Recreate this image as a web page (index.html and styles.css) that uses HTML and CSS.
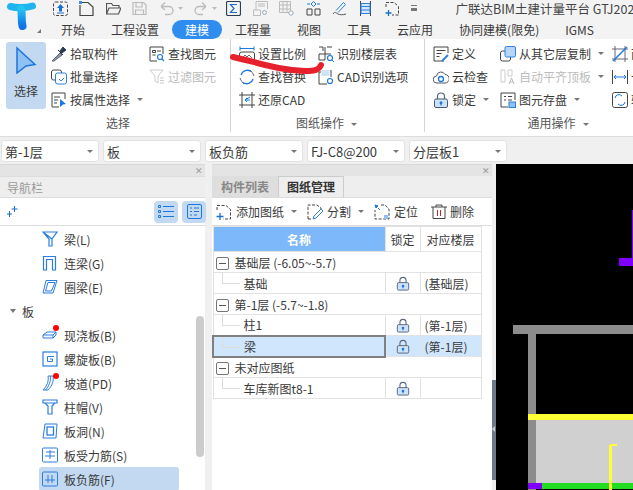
FILE: index.html
```html
<!DOCTYPE html>
<html lang="en">
<head>
    <meta charset="UTF-8">
    <title>广联达BIM土建计量平台</title>
    <link rel="stylesheet" href="styles.css">
</head>
<body>
    <svg class="defs" width="0" height="0">
        <symbol id="lock" viewBox="0 0 16 16">
            <path d="M4.500 7V4.500a3.500 3.500 0 0 1 7 0V7" fill="none" stroke="#5a6478" stroke-width="1.200"/>
            <rect x="1.500" y="7" width="13" height="8.500" rx="1.500" fill="#cfe3f8" stroke="#4a5a78"/>
            <circle cx="8" cy="10.800" r="1.500" fill="#1a78e0"/>
            <path d="M8 11v2.500" stroke="#1a78e0" stroke-width="1.200"/>
        </symbol>
    </svg>

    <header class="top">
        <div class="logo">
            <svg width="47" height="38" viewBox="0 0 47 38">
                <defs><linearGradient id="tg" x1="0" y1="0" x2="0" y2="1"><stop offset="0" stop-color="#22c4f2"/><stop offset="1" stop-color="#1272e6"/></linearGradient></defs>
                <path d="M10.500 6.500C16 8 26 8 32.500 6" fill="none" stroke="#1fb4ee" stroke-width="7" stroke-linecap="round"/>
                <path d="M21 9C22.500 14 21 20 22.500 26" fill="none" stroke="url(#tg)" stroke-width="8" stroke-linecap="round"/>
                <path d="M37 33h4v-4z" fill="#777"/>
            </svg>
        </div>
        <div class="top-main">
            <div class="qat">
                <svg class="q" viewBox="0 0 15 15"><rect x=".5" y="1" width="14" height="13.500" rx="2" fill="none" stroke="#444" stroke-dasharray="3 1.500"/><path d="M7.500 3l3.500 4H9v3.500H6V7H4z" fill="#1a6fd0"/><path d="M4 12h7" stroke="#1a6fd0"/></svg>
                <svg class="q" viewBox="0 0 15 15"><path d="M3 1.500h6l5 4.500v8.500H1V4" fill="none" stroke="#444" stroke-width="1.200"/><path d="M0 0h3v3H0z" fill="#3a8be8"/></svg>
                <svg class="q" viewBox="0 0 15 15"><path d="M.5 13V2.500h5l1.500 2h6V7M.5 13l2.500-6h12l-2.500 6z" fill="none" stroke="#555" stroke-width="1.200"/></svg>
                <svg class="q" viewBox="0 0 15 15"><path d="M1 1.500h10.500L14 4v9.500H1zM4 1.500V6h6V1.500M3.500 13.500V9h8v4.500" fill="none" stroke="#bbb" stroke-width="1.200"/></svg>
                <svg class="q wide" viewBox="0 0 24 15"><path d="M2 5.500h8a4 4 0 0 1 0 8H6M2 5.500L6 1.500M2 5.500L6 9" fill="none" stroke="#bbb" stroke-width="1.300"/><path d="M19 6h5l-2.500 3z" fill="#bbb"/></svg>
                <svg class="q wide2" viewBox="0 0 23 15"><path d="M12 5.500H5a4 4 0 0 0 0 8h4M12 5.500L8 1.500M12 5.500L8 9" fill="none" stroke="#bbb" stroke-width="1.300"/><path d="M18 6h5l-2.500 3z" fill="#bbb"/></svg>
                <svg class="q" viewBox="0 0 15 15"><rect x=".5" y=".5" width="14" height="14" rx="1.500" fill="none" stroke="#2c3e50" stroke-width="1.200"/><path d="M11 3.500H4.500L8 7.500l-3.500 4H11" fill="none" stroke="#1a6fd0" stroke-width="1.200"/></svg>
                <svg class="q" viewBox="0 0 15 15"><path d="M3 9V.5h11.500V8M.5 9h7v5.500H.5z" fill="none" stroke="#bbb"/><path d="M5 3h7M5 5h7" stroke="#bbb"/><circle cx="11.500" cy="11.500" r="2" fill="none" stroke="#9ab"/></svg>
                <svg class="q" viewBox="0 0 15 15"><path d="M.5.500h11v11H.5zM.5 4h11M.5 8h11M4 .5v11M8 .5v11" fill="none" stroke="#bbb"/><circle cx="12" cy="12" r="2.200" fill="#fff" stroke="#9ab"/></svg>
                <svg class="q" viewBox="0 0 15 15"><path d="M1 8h5v6H1zM9 8h5v6H9z" fill="none" stroke="#444"/><path d="M5 3l2.500-2.500L10 3 7.500 5.500z" fill="none" stroke="#1a78e0"/><path d="M1 3h3M11 3h3" stroke="#1a78e0"/></svg>
                <svg class="q" viewBox="0 0 15 15"><path d="M4 9.500l7.500-8 2 2-7.500 8" fill="none" stroke="#2f80e0"/><path d="M1 13c2-3 3-1 5 0s5 1 8 0" fill="none" stroke="#555"/></svg>
                <svg class="q" viewBox="0 0 15 15"><path d="M2.500 0v15M12.500 0v15" stroke="#444"/><path d="M3 2.500h9v10H3zM3 5.500h9M3 9h9" fill="#d3e6fb" stroke="#2f80e0"/></svg>
                <svg class="q" viewBox="0 0 15 15"><path d="M1 6V1.500h8l4.500 4v8.500H7" fill="none" stroke="#444" stroke-dasharray="3 1.500"/><path d="M3.500 9v6M.5 12h6" stroke="#1a6fd0" stroke-width="1.300"/></svg>
                <span class="qat-more"></span>
                <span class="title">广联达BIM土建计量平台 GTJ202</span>
            </div>
            <nav class="tabs">
                <span class="tab">开始</span>
                <span class="tab">工程设置</span>
                <span class="tab active">建模</span>
                <span class="tab">工程量</span>
                <span class="tab">视图</span>
                <span class="tab">工具</span>
                <span class="tab">云应用</span>
                <span class="tab">协同建模(限免)</span>
                <span class="tab">IGMS</span>
            </nav>
        </div>
    </header>

    <section class="ribbon">
        <div class="group g-select">
            <div class="group-body">
                <div class="big-btn">
                    <svg width="22" height="28" viewBox="0 0 22 28"><path d="M2 2l18 16.500-9 1.500-9 7z" fill="#8fc1f5" stroke="#1e74dc" stroke-width="1.500"/></svg>
                    <span>选择</span>
                </div>
                <div class="col c98">
                    <div class="item"><svg class="i" viewBox="0 0 16 16"><path d="M1 15l8-8 2 2-8 6z" fill="#8a97a8" stroke="#667"/><path d="M9 5l3-4 3 3-4 3z M7 4l5 5" fill="#2a3a50" stroke="#2a3a50"/></svg>拾取构件</div>
                    <div class="item"><svg class="i" viewBox="0 0 16 16"><rect x=".5" y="1" width="10" height="10" rx="2" fill="none" stroke="#444"/><rect x="4.500" y="4" width="11" height="11" rx="2" fill="#fff" stroke="#2f80e0"/><path d="M8 10l2 2 3-3" fill="none" stroke="#2f80e0"/></svg>批量选择</div>
                    <div class="item"><svg class="i" viewBox="0 0 16 16"><path d="M9 1H1v14h7M9 1h5v6" fill="none" stroke="#444"/><path d="M3 5h6M3 8h4M3 11h3" stroke="#444"/><path d="M9 7l6 5-3 .5-3 2.500z" fill="#1a78e0"/></svg>按属性选择<i class="caret"></i></div>
                </div>
                <div class="col">
                    <div class="item"><svg class="i" viewBox="0 0 16 16"><path d="M8 15H1V1h13v7" fill="none" stroke="#444"/><path d="M3.500 4.500h3v2h-3zM3.500 9h3M8 5h4" fill="none" stroke="#444"/><circle cx="11" cy="11" r="2.500" fill="none" stroke="#1a78e0" stroke-width="1.200"/><path d="M13 13l2 2" stroke="#1a78e0" stroke-width="1.200"/></svg>查找图元</div>
                    <div class="item off"><svg class="i" viewBox="0 0 16 16"><path d="M1 1h13L9 7v7L6 12V7z" fill="none" stroke="#ccc"/><path d="M11 9h4M11 11.500h4M11 14h4" stroke="#ccc"/></svg>过滤图元</div>
                </div>
            </div>
            <div class="group-label">选择</div>
        </div>

        <div class="group g-drawing">
            <div class="group-body">
                <div class="col c79">
                    <div class="item"><svg class="i" viewBox="0 0 16 16"><path d="M1 2.500h14M1 .5v4M15 .5v4" stroke="#1a78e0"/><rect x=".5" y="6" width="15" height="9" rx="2" fill="none" stroke="#444"/><path d="M3 12l3-3 2 2 2-2 3 3" fill="none" stroke="#667"/></svg>设置比例</div>
                    <div class="item"><svg class="i" viewBox="0 0 16 16"><path d="M2 6a6.500 6.500 0 0 1 10-3.500M14 10a6.500 6.500 0 0 1-10 3.500" fill="none" stroke="#1a78e0" stroke-width="1.300"/><path d="M1 9c1 3 3 5 4 6M15 7c-1-3-3-5-4-6" fill="none" stroke="#667"/></svg>查找替换</div>
                    <div class="item"><svg class="i" viewBox="0 0 16 16"><path d="M3 0v16M13 0v16M0 3h16M0 13h16" stroke="#444"/><path d="M11 5L6 8h5M6 8l2-2M6 8l2 2" fill="none" stroke="#1a78e0"/></svg>还原CAD</div>
                </div>
                <div class="col">
                    <div class="item"><svg class="i" viewBox="0 0 16 16"><path d="M1 1h4v4M9 1h5M1 8h12M1 8v6h6V8M7 1v7" fill="none" stroke="#444"/><circle cx="12" cy="12" r="2.500" fill="none" stroke="#1a78e0" stroke-width="1.200"/><path d="M14 14l2 2" stroke="#1a78e0"/></svg>识别楼层表</div>
                    <div class="item"><svg class="i" viewBox="0 0 16 16"><path d="M1 3v12h8M1 3h2M13 1v7" fill="none" stroke="#444"/><rect x="3.500" y="1" width="8" height="6" fill="#cfe3f8"/><circle cx="12" cy="12" r="2.500" fill="none" stroke="#1a78e0" stroke-width="1.200"/></svg>CAD识别选项</div>
                </div>
            </div>
            <div class="group-label">图纸操作<i class="caret"></i></div>
        </div>

        <div class="group g-general">
            <div class="group-body">
                <div class="col c67">
                    <div class="item"><svg class="i" viewBox="0 0 16 16"><path d="M11 15H1V1h14v6" fill="none" stroke="#444"/><path d="M3.500 4.500h9M3.500 7.500h5M3.500 10.500h3" stroke="#444"/><path d="M9 15l6-6" stroke="#2f80e0" stroke-width="2"/></svg>定义</div>
                    <div class="item"><svg class="i" viewBox="0 0 16 16"><path d="M4 14a3.500 3.500 0 0 1-.5-7 4.500 4.500 0 0 1 8.500-1.500A4 4 0 0 1 12 14z" fill="none" stroke="#556"/><circle cx="8" cy="10" r="2.500" fill="none" stroke="#1a78e0" stroke-width="1.300"/></svg>云检查</div>
                    <div class="item"><svg class="i" viewBox="0 0 16 16"><use href="#lock"/></svg>锁定<i class="caret"></i></div>
                </div>
                <div class="col c112">
                    <div class="item"><svg class="i" viewBox="0 0 16 16"><rect x=".5" y="5" width="10" height="10" rx="2" fill="none" stroke="#444"/><rect x="5" y=".5" width="10.500" height="10.500" rx="1.500" fill="#b6d5f8" stroke="#2f80e0"/></svg>从其它层复制<i class="caret"></i></div>
                    <div class="item off"><svg class="i" viewBox="0 0 16 16"><path d="M1 1h4v12H1zM8 1h4v6H8z" fill="none" stroke="#ccc"/><path d="M9 15l2.500-6 2.500 6M10 13h3" fill="none" stroke="#bbb"/></svg>自动平齐顶板<i class="caret"></i></div>
                    <div class="item"><svg class="i" viewBox="0 0 16 16"><path d="M8 15H1V1h14v7" fill="none" stroke="#444"/><path d="M4 4.500h2M8 4.500h4M4 8h2M8 8h4" stroke="#444"/><rect x="9" y="10" width="6.500" height="5.500" fill="#8fc1f5" stroke="#2f80e0"/></svg>图元存盘<i class="caret"></i></div>
                </div>
                <div class="col">
                    <div class="item"><svg class="i" viewBox="0 0 16 16"><path d="M3 0v16M13 0v16M0 3h16M0 13h16" stroke="#667"/><path d="M1 15L15 1" stroke="#1a78e0" stroke-width="1.500"/></svg>两点</div>
                    <div class="item"><svg class="i" viewBox="0 0 16 16"><path d="M.5 1v14M15.500 1v14" stroke="#444"/><path d="M2 8h12M4 6L2 8l2 2M12 6l2 2-2 2" fill="none" stroke="#1a78e0"/></svg>长度</div>
                    <div class="item"><svg class="i" viewBox="0 0 16 16"><rect x=".5" y=".5" width="15" height="15" rx="2" fill="none" stroke="#444"/><path d="M3 6a4 4 0 0 1 7-2M13 10a4 4 0 0 1-7 2" fill="none" stroke="#1a78e0"/></svg>转换</div>
                </div>
            </div>
            <div class="group-label">通用操作<i class="caret"></i></div>
        </div>
    </section>

    <div class="combos">
        <div class="combo">第-1层<i class="caret"></i></div>
        <div class="combo">板<i class="caret"></i></div>
        <div class="combo">板负筋<i class="caret"></i></div>
        <div class="combo">FJ-C8@200<i class="caret"></i></div>
        <div class="combo">分层板1<i class="caret"></i></div>
    </div>

    <main class="work">
        <aside class="nav-panel">
            <div class="pane-top"><span class="close">✕</span></div>
            <div class="nav-title">导航栏</div>
            <div class="nav-tools">
                <svg class="sparkle" width="11" height="11" viewBox="0 0 11 11"><path d="M7.500 0v6M4.500 3h6M2.500 5v6M0 8h5" stroke="#1a6fd0"/></svg>
                <span class="tool-btn"><svg width="16" height="13" viewBox="0 0 16 13"><path d="M5 1.500h11M5 6.500h11M5 11.500h11" stroke="#1a78e0"/><path d="M.5.500h2v2h-2zM.5 5.500h2v2h-2zM.5 10.500h2v2h-2z" fill="none" stroke="#1a78e0"/></svg></span>
                <span class="tool-btn"><svg width="15" height="15" viewBox="0 0 15 15"><rect x=".5" y=".5" width="14" height="14" rx="1.500" fill="none" stroke="#1a78e0"/><path d="M3 4h2M7 4h5M3 7.500h2M7 7.500h5M3 11h2M7 11h3" stroke="#1a78e0"/></svg></span>
            </div>
            <div class="tree">
                <div class="node"><svg class="n" viewBox="0 0 16 16"><path d="M1 1h14L10 8v7H7V8zM1 1l9 7" fill="none" stroke="#2a7de1" stroke-width="1.200"/></svg>梁(L)</div>
                <div class="node"><svg class="n" viewBox="0 0 16 16"><path d="M1.500 15V1.500h12V15M4.500 15V4.500h6V15" fill="none" stroke="#2a7de1" stroke-width="1.200"/><path d="M1 15h4M10 15h4" stroke="#2a7de1"/></svg>连梁(G)</div>
                <div class="node"><svg class="n" viewBox="0 0 16 16"><path d="M4 1.500h11L11 14H1zM6 3.500h7L9.500 12H3.500z" fill="none" stroke="#2a7de1"/></svg>圈梁(E)</div>
                <div class="branch"><i class="caret-down"></i>板</div>
                <div class="node"><svg class="n" viewBox="0 0 16 16"><path d="M1 8h10l3-3H5zM1 8v3h10l3-3V5M11 8v3" fill="none" stroke="#2a7de1"/></svg>现浇板(B)<b class="dot"></b></div>
                <div class="node"><svg class="n" viewBox="0 0 16 16"><rect x="1" y="1" width="14" height="14" fill="none" stroke="#2a7de1" stroke-width="1.200"/><path d="M8 8h2.500v2.500h-5v-5H12" fill="none" stroke="#2a7de1"/></svg>螺旋板(B)</div>
                <div class="node"><svg class="n" viewBox="0 0 16 16"><path d="M6 1h5c1 5-1 10-5 14H1c4-4 6-9 5-14zM8.500 1C9 6 7 11 3.500 15" fill="none" stroke="#2a7de1"/></svg>坡道(PD)<b class="dot"></b></div>
                <div class="node"><svg class="n" viewBox="0 0 16 16"><path d="M1 1h14v3H1zM3 4l3 3v8h4V7l3-3" fill="none" stroke="#2a7de1" stroke-width="1.200"/></svg>柱帽(V)</div>
                <div class="node"><svg class="n" viewBox="0 0 16 16"><path d="M3 1h12l-1 14H1z" fill="none" stroke="#2a7de1"/><rect x="5" y="4" width="6.500" height="8" fill="none" stroke="#2a7de1" stroke-width="1.300"/></svg>板洞(N)</div>
                <div class="node"><svg class="n" viewBox="0 0 16 16"><rect x=".5" y="1" width="15" height="14" rx="1" fill="none" stroke="#2a7de1"/><path d="M4 5h9M3 9h10M8 3v9" stroke="#2a7de1"/></svg>板受力筋(S)</div>
                <div class="node current"><svg class="n" viewBox="0 0 16 16"><rect x=".5" y="1" width="15" height="14" rx="1" fill="none" stroke="#2a7de1"/><path d="M3 9h10M6 4v8M10 4v8" stroke="#2a7de1"/></svg>板负筋(F)</div>
            </div>
            <span class="nav-scroll"></span>
        </aside>

        <section class="draw-panel">
            <div class="pane-top"><span class="close">✕</span></div>
            <div class="pane-tabs">
                <span class="pane-tab">构件列表</span>
                <span class="pane-tab on">图纸管理</span>
            </div>
            <div class="pane-tools">
                <span class="ptool"><svg class="i" viewBox="0 0 16 16"><path d="M1 6V1.500h9l4.500 4V15H7" fill="none" stroke="#444" stroke-dasharray="3 1.500"/><path d="M4 9v7M.5 12.500h7" stroke="#1a6fd0" stroke-width="1.300"/></svg>添加图纸<i class="caret"></i></span>
                <span class="ptool"><svg class="i" viewBox="0 0 16 16"><path d="M1 15V1h9l4 3v2M1 15h4" fill="none" stroke="#444" stroke-dasharray="3 1.500"/><path d="M6 15l1-3 7-7 2 2-7 7z" fill="none" stroke="#2f80e0"/></svg>分割<i class="caret"></i></span>
                <span class="ptool"><svg class="i" viewBox="0 0 16 16"><path d="M7 1h4l4 4v10H1V6" fill="none" stroke="#444" stroke-dasharray="3 1.500"/><path d="M1 1l3 1-2 2zM4 4l2 2" stroke="#1a78e0" fill="#1a78e0"/><rect x="10" y="11" width="4" height="4" fill="#8fc1f5"/></svg>定位</span>
                <span class="ptool del"><svg class="i" viewBox="0 0 16 16"><path d="M0 3h16M5 3V1h6v2M2 3v11.500h12V3" fill="none" stroke="#444"/><path d="M6.500 6v6M9.500 6v6" stroke="#d02020"/></svg>删除</span>
            </div>
            <table class="sheet">
                <colgroup><col class="c-name"><col class="c-lock"><col class="c-floor"></colgroup>
                <tr class="head"><th class="name">名称</th><th>锁定</th><th>对应楼层</th></tr>
                <tr><td colspan="3" class="grp"><i class="minus"></i>基础层 (-6.05~-5.7)</td></tr>
                <tr><td class="leaf">基础</td><td class="lk"><svg class="l"><use href="#lock"/></svg></td><td>(基础层)</td></tr>
                <tr><td colspan="3" class="grp"><i class="minus"></i>第-1层 (-5.7~-1.8)</td></tr>
                <tr><td class="leaf">柱1</td><td class="lk"><svg class="l"><use href="#lock"/></svg></td><td>(第-1层)</td></tr>
                <tr class="sel"><td class="leaf">梁</td><td class="lk"><svg class="l"><use href="#lock"/></svg></td><td>(第-1层)</td></tr>
                <tr><td colspan="3" class="grp"><i class="minus"></i>未对应图纸</td></tr>
                <tr><td class="leaf">车库新图t8-1</td><td class="lk"><svg class="l"><use href="#lock"/></svg></td><td></td></tr>
            </table>
        </section>

        <div class="splitter"><span class="grip"></span></div>

        <div class="canvas">
            <svg width="137" height="326" viewBox="496 164 137 326">
                <path d="M632 210h1v48h-1z" fill="#8000ff"/>
                <path d="M619 258h14v8h-14z" fill="#8000ff"/>
                <path d="M513 325h120v9H513z" fill="#8c8c8c"/>
                <path d="M528 334h8v156h-8z" fill="#8c8c8c"/>
                <path d="M536 420h97v67h-97z" fill="#d0d0d0"/>
                <path d="M528 414h105v6H528z" fill="#ffff33"/>
                <path d="M542 483h91v6h-91z" fill="#22dd22"/>
                <path d="M528 483h14v6h-14z" fill="#8000ff"/>
                <path d="M609 490v-45h1.500v-1H617v2h-5v44z" fill="#ffff33"/>
            </svg>
        </div>
    </main>

    <svg class="mark" width="110" height="40" viewBox="0 0 110 40"><path d="M3 17C30 23 48 30 75 31c10 0 14-1 16-6" fill="none" stroke="#e6202c" stroke-width="6" stroke-linecap="round"/></svg>
</body>
</html>
```

FILE: styles.css
```css
* {
    box-sizing: border-box;
}
html, body {
    margin: 0;
    height: 490px;
    overflow: hidden;
}
body {
    position: relative;
    width: 633px;
    font-family: "Noto Sans CJK SC", "Noto Sans", sans-serif;
    font-size: 12px;
    color: #3a3a3a;
    background: #f0f0f0;
}
.defs {
    position: absolute;
}
.caret {
    display: inline-block;
    width: 0;
    height: 0;
    margin-left: 7px;
    vertical-align: middle;
    border-left: 3px solid transparent;
    border-right: 3px solid transparent;
    border-top: 3px solid #777;
}

/* title bar and tabs */
.top {
    display: flex;
    height: 39px;
    background: #f3f3f3;
}
.logo {
    width: 47px;
    height: 38px;
}
.logo svg {
    display: block;
}
.top-main {
    flex: 1;
    min-width: 0;
}
.qat {
    display: flex;
    align-items: center;
    gap: 11.400px;
    height: 20px;
    padding: 0 0 4px 6px;
    white-space: nowrap;
    overflow: hidden;
}
.q {
    flex: none;
    width: 15px;
    height: 15px;
}
.q.wide {
    width: 24px;
}
.q.wide2 {
    width: 23px;
    margin-right: -2px;
}
.qat-more {
    flex: none;
    width: 6px;
    height: 6px;
    border-top: 1px solid #777;
    border-bottom: 3px solid #777;
}
.title {
    flex: none;
    margin-left: 27px;
    font-size: 12.500px;
    color: #444;
}
.tabs {
    display: flex;
    height: 19px;
    padding-left: 1px;
}
.tab {
    height: 19px;
    padding: 0 13px;
    line-height: 19px;
    white-space: nowrap;
}
.tab.active {
    color: #fff;
    background: #2f8df0;
    border-radius: 10px;
}

/* ribbon */
.ribbon {
    display: flex;
    height: 98px;
    background: #fff;
    border-bottom: 1px solid #ddd;
}
.group {
    display: flex;
    flex-direction: column;
    padding-top: 3px;
    border-right: 1px solid #d4d4d4;
    margin-bottom: 4px;
}
.group:last-child {
    flex: 1;
    border-right: 0;
    min-width: 0;
}
.g-select {
    width: 231px;
    padding-left: 6px;
}
.g-drawing {
    width: 194px;
    padding-left: 8px;
}
.g-general {
    padding-left: 8px;
}
.group-body {
    display: flex;
    flex: 1;
}
.group-label {
    height: 18px;
    line-height: 18px;
    text-align: center;
    color: #555;
}
.g-drawing .group-label {
    padding-right: 10px;
}
.g-general .group-label {
    padding-left: 50px;
}
.big-btn {
    display: flex;
    flex-direction: column;
    align-items: center;
    width: 40px;
    height: 67px;
    margin-right: 5px;
    padding-top: 4px;
    background: #c2d9f1;
    border-radius: 3px;
}
.big-btn span {
    margin-top: 8px;
}
.col {
    flex: none;
}
.c98 {
    width: 98px;
}
.c79 {
    width: 79px;
}
.c67 {
    width: 67px;
}
.c112 {
    width: 112px;
}
.item {
    display: flex;
    align-items: center;
    height: 23px;
    white-space: nowrap;
}
.item.off {
    color: #bbb;
}
.i {
    flex: none;
    width: 16px;
    height: 16px;
    margin-right: 3px;
}

/* combos */
.combos {
    display: flex;
    gap: 4px;
    height: 27px;
    padding: 3px 1px 2px;
}
.combo {
    position: relative;
    width: 98px;
    padding-left: 3px;
    font-size: 13px;
    line-height: 21px;
    background: #fff;
    border: 1px solid #e2e2e2;
    border-radius: 3px;
}
.combo .caret {
    position: absolute;
    right: 5px;
    top: 9px;
}

/* work area */
.work {
    display: flex;
    height: 326px;
}
.nav-panel {
    position: relative;
    flex: none;
    width: 205px;
    margin-right: 7px;
    background: #fff;
}
.pane-top {
    display: flex;
    justify-content: flex-end;
    height: 12px;
    padding-right: 2px;
    background: #e4e4e4;
    border-top: 1px solid #d8d8d8;
}
.close {
    font-size: 9px;
    line-height: 11px;
    color: #999;
}
.nav-title {
    height: 22px;
    padding-left: 7px;
    line-height: 21px;
    color: #999;
    background: #eee;
    border-top: 1px solid #ddd;
    border-bottom: 1px solid #ddd;
}
.nav-tools {
    display: flex;
    align-items: center;
    gap: 4px;
    height: 28px;
    margin-right: -1px;
    border-bottom: 1px solid #ddd;
}
.sparkle {
    margin: 0 auto 0 7px;
}
.tool-btn {
    display: flex;
    align-items: center;
    justify-content: center;
    width: 24px;
    height: 22px;
    background: #c2d9f1;
    border-radius: 4px;
}
.tree {
    padding-top: 1px;
}
.node, .branch {
    position: relative;
    display: flex;
    align-items: center;
    height: 24px;
    white-space: nowrap;
}
.node {
    width: 140px;
    margin-left: 39px;
    padding-left: 3px;
    border-radius: 3px;
}
.node.current {
    background: #c2d9f1;
}
.branch {
    padding-left: 10px;
}
.n {
    flex: none;
    width: 16px;
    height: 16px;
    margin-right: 6px;
}
.dot {
    position: absolute;
    left: 14px;
    top: 2px;
    width: 6px;
    height: 6px;
    background: #f00;
    border-radius: 50%;
}
.caret-down {
    width: 0;
    height: 0;
    margin-right: 6px;
    border-left: 3.500px solid transparent;
    border-right: 3.500px solid transparent;
    border-top: 4px solid #777;
}
.nav-scroll {
    position: absolute;
    right: 1px;
    top: 152px;
    width: 8px;
    height: 141px;
    background: #ccc;
    border-radius: 4px;
}
.draw-panel {
    flex: none;
    width: 280px;
    background: #fff;
}
.pane-tabs {
    display: flex;
    height: 22px;
    background: #eee;
    border-bottom: 1px solid #ddd;
}
.pane-tab {
    width: 66px;
    text-align: center;
    line-height: 21px;
    font-weight: 700;
    color: #888;
    background: #dedede;
}
.pane-tab.on {
    color: #333;
    background: #eee;
    border: 1px solid #ccc;
    border-bottom: 0;
    line-height: 20px;
}
.pane-tools {
    display: flex;
    align-items: center;
    gap: 10px;
    height: 28px;
    padding-left: 4px;
    border-bottom: 1px solid #ddd;
}
.ptool {
    display: flex;
    align-items: center;
    white-space: nowrap;
}
.ptool .i {
    margin-right: 4px;
}
.ptool.del {
    margin-left: 3px;
}
.ptool.del .i {
    margin-right: 3px;
}
.sheet {
    width: 268px;
    border-collapse: collapse;
    table-layout: fixed;
}
.c-name {
    width: 172px;
}
.c-lock {
    width: 35px;
}
.c-floor {
    width: 61px;
}
.sheet th, .sheet td {
    height: 21px;
    padding: 0 0 0 4px;
    white-space: nowrap;
    font-weight: 400;
    border: 1px solid #e2e2e2;
}
.sheet .head th {
    height: 25px;
    text-align: center;
    padding: 0;
}
.sheet th.name {
    font-weight: 700;
    color: #fff;
    background: #7db8fa;
}
.sheet td.grp {
    padding-left: 2px;
}
.minus {
    position: relative;
    display: inline-block;
    width: 13px;
    height: 13px;
    margin-right: 6px;
    vertical-align: -2px;
    background: #fff;
    border: 1px solid #777;
    border-radius: 2px;
}
.minus::after {
    content: "";
    position: absolute;
    left: 2px;
    right: 2px;
    top: 5px;
    height: 1px;
    background: #555;
}
.leaf {
    position: relative;
    padding-left: 30px !important;
}
.leaf::before {
    content: "";
    position: absolute;
    left: 8px;
    top: 0;
    width: 17px;
    height: 10px;
    border-left: 1px solid #ddd;
    border-bottom: 1px solid #ddd;
}
.sheet td.lk {
    padding: 0;
    text-align: center;
}
.l {
    display: block;
    width: 14px;
    height: 15px;
    margin: 0 auto;
}
.sel td {
    background: #d0e6fc;
}
.sel .leaf {
    border: 2px solid #808080;
}
.splitter {
    position: relative;
    flex: none;
    width: 4px;
}
.grip {
    position: absolute;
    left: 0;
    top: 216px;
    width: 4px;
    height: 100px;
    background: #6c7a89;
}
.grip::after {
    content: "";
    position: absolute;
    left: 0;
    top: 46px;
    border-top: 3px solid transparent;
    border-bottom: 3px solid transparent;
    border-right: 3px solid #ccc;
}
.canvas {
    flex: 1;
    background: #000;
    overflow: hidden;
}
.canvas svg {
    display: block;
}

/* hand drawn red mark over the ribbon */
.mark {
    position: absolute;
    left: 230px;
    top: 40px;
}
```
